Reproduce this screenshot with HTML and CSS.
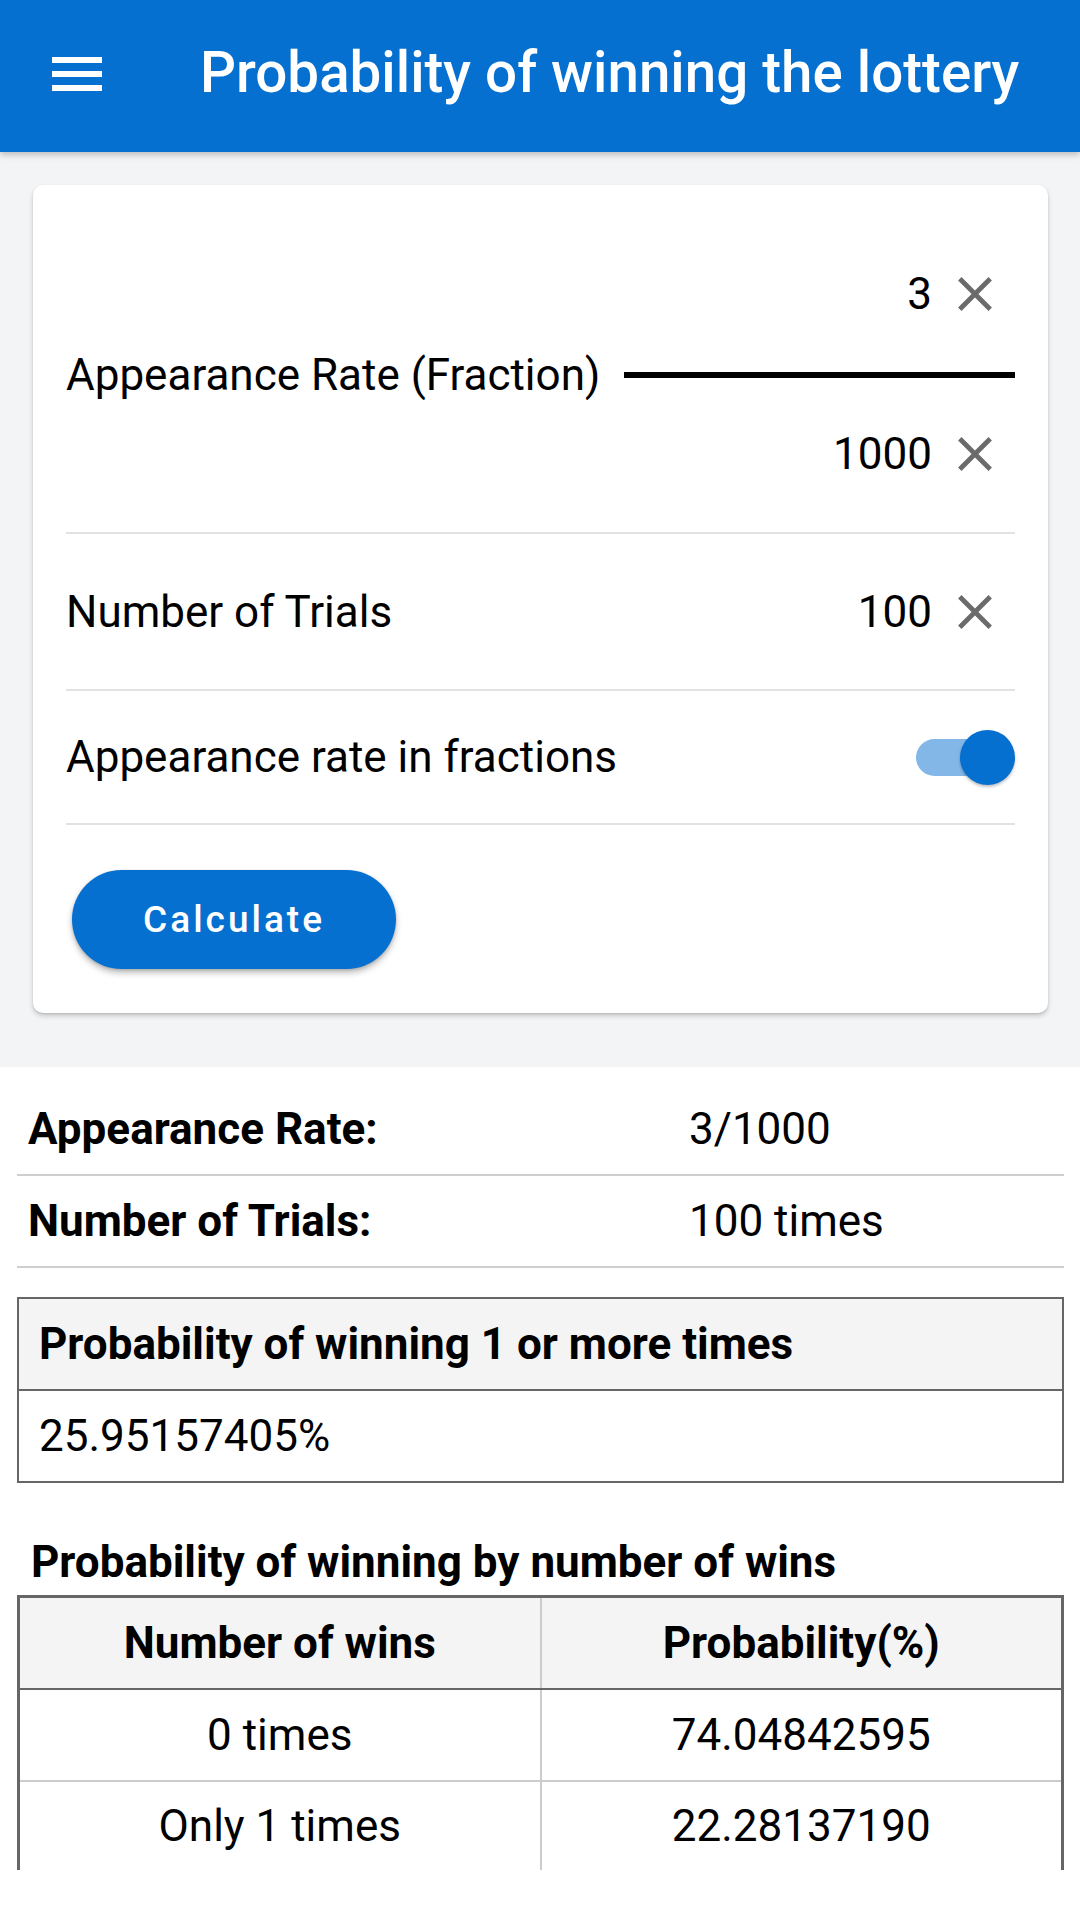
FILE: index.html
```html
<!DOCTYPE html>
<html>
<head>
<meta charset="utf-8">
<link rel="stylesheet" href="styles.css">
</head>
<body>
<header class="appbar">
  <svg class="menu" width="50" height="34" viewBox="0 0 50 34"><rect x="0" y="0" width="50" height="6" fill="#fff"/><rect x="0" y="14" width="50" height="6" fill="#fff"/><rect x="0" y="28" width="50" height="6" fill="#fff"/></svg>
  <div class="title">Probability of winning the lottery</div>
</header>
<main class="top">
  <section class="card">
    <div class="frac-row">
      <div class="frac-label">Appearance Rate (Fraction)</div>
      <div class="frac-col">
        <div class="field"><span class="val">3</span><svg class="clear" viewBox="0 0 24 24"><path d="M19 6.41L17.59 5 12 10.59 6.41 5 5 6.41 10.59 12 5 17.59 6.41 19 12 13.41 17.59 19 19 17.59 13.41 12z"/></svg></div>
        <div class="frac-line"></div>
        <div class="field"><span class="val">1000</span><svg class="clear" viewBox="0 0 24 24"><path d="M19 6.41L17.59 5 12 10.59 6.41 5 5 6.41 10.59 12 5 17.59 6.41 19 12 13.41 17.59 19 19 17.59 13.41 12z"/></svg></div>
      </div>
    </div>
    <div class="row trials">
      <div class="label">Number of Trials</div>
      <div class="field"><span class="val">100</span><svg class="clear" viewBox="0 0 24 24"><path d="M19 6.41L17.59 5 12 10.59 6.41 5 5 6.41 10.59 12 5 17.59 6.41 19 12 13.41 17.59 19 19 17.59 13.41 12z"/></svg></div>
    </div>
    <div class="row toggle-row">
      <div class="label">Appearance rate in fractions</div>
      <div class="switch"><div class="track"></div><div class="thumb"></div></div>
    </div>
    <div class="actions">
      <button class="btn">Calculate</button>
    </div>
  </section>
</main>
<section class="results">
  <div class="sum-row"><div class="sum-label">Appearance Rate:</div><div class="sum-val">3/1000</div></div>
  <div class="sum-row"><div class="sum-label">Number of Trials:</div><div class="sum-val">100 times</div></div>
  <table class="tbl one">
    <thead><tr><th>Probability of winning 1 or more times</th></tr></thead>
    <tbody><tr><td>25.95157405%</td></tr></tbody>
  </table>
  <h2 class="heading">Probability of winning by number of wins</h2>
  <table class="tbl two">
    <thead><tr><th>Number of wins</th><th>Probability(%)</th></tr></thead>
    <tbody>
      <tr><td>0 times</td><td>74.04842595</td></tr>
      <tr><td>Only 1 times</td><td>22.28137190</td></tr>
    </tbody>
  </table>
</section>
<div class="footer"></div>
</body>
</html>
```
FILE: styles.css
```css
* { box-sizing: border-box; }
html, body { margin: 0; padding: 0; }
body {
  width: 1080px;
  height: 1920px;
  overflow: hidden;
  background: #fff;
  font-family: Roboto, "Noto Sans", sans-serif;
  color: #000;
}
.appbar {
  height: 152px;
  background: #0670d1;
  display: flex;
  align-items: center;
  padding-left: 52px;
  position: relative;
  z-index: 2;
  box-shadow: 0 3px 6px rgba(0,0,0,0.22);
}
.menu { display: block; margin-top: -4px; }
.title {
  color: #fff;
  font-size: 56.5px;
  font-weight: 500;
  margin-left: 98px;
  margin-top: -6px;
  white-space: nowrap;
}
.top {
  background: #f3f4f6;
  padding: 33px 32px 54px 33px;
}
.card {
  background: #fff;
  border-radius: 10px;
  box-shadow: 0 3px 5px rgba(0,0,0,0.18), 0 1px 2px rgba(0,0,0,0.1);
  padding: 0 33px 44px 33px;
}
.frac-row {
  display: flex;
  align-items: center;
  padding: 54px 0 23px;
  border-bottom: 2px solid #e2e2e2;
}
.frac-label, .label {
  font-size: 44px;
  white-space: nowrap;
}
.frac-label { padding-top: 2px; }
.frac-col { flex: 1; margin-left: 24px; }
.field {
  display: flex;
  justify-content: flex-end;
  align-items: center;
  height: 110px;
  padding-right: 11px;
}
.val { font-size: 44px; }
.clear {
  width: 58px;
  height: 58px;
  fill: #6b6b6b;
  margin-left: 14px;
}
.frac-line {
  height: 6px;
  background: #000;
  margin: 23px 0 21px;
}
.row {
  display: flex;
  align-items: center;
  justify-content: space-between;
  border-bottom: 2px solid #e2e2e2;
}
.trials { height: 157px; }
.toggle-row { height: 134px; }
.switch {
  position: relative;
  width: 99px;
  height: 55px;
}
.track {
  position: absolute;
  left: 0;
  top: 9px;
  width: 92px;
  height: 37px;
  border-radius: 19px;
  background: #0670d1;
  opacity: 0.5;
}
.thumb {
  position: absolute;
  right: 0;
  top: 0;
  width: 55px;
  height: 55px;
  border-radius: 50%;
  background: #0670d1;
  box-shadow: 0 2px 3px rgba(0,0,0,0.25);
}
.actions { padding-top: 45px; padding-left: 6px; }
.btn {
  display: block;
  width: 324px;
  height: 99px;
  border: 0;
  border-radius: 50px;
  background: #0670d1;
  color: #fff;
  font-family: Roboto, sans-serif;
  font-size: 37px;
  font-weight: 500;
  letter-spacing: 3px;
  padding: 0;
  box-shadow: 0 4px 6px rgba(0,0,0,0.25), 0 1px 3px rgba(0,0,0,0.15);
}
.results {
  height: 803px;
  overflow: hidden;
  padding: 17px 16px 0 17px;
}
.sum-row {
  display: grid;
  grid-template-columns: 661px 1fr;
  height: 92px;
  align-items: center;
  border-bottom: 2px solid #cfcfcf;
  font-size: 44px;
}
.sum-label { font-weight: 700; padding-left: 11px; }
.sum-val { padding-left: 11px; }
.tbl {
  width: 100%;
  border-collapse: collapse;
  font-size: 44px;
}
.tbl th, .tbl td { height: 92px; padding: 0 20px; }
.tbl th { background: #f4f4f4; font-weight: 700; }
.one { margin-top: 29px; border: 2px solid #666; }
.one th { text-align: left; border-bottom: 2px solid #666; }
.one td { text-align: left; }
.heading {
  font-size: 44px;
  font-weight: 700;
  margin: 53px 0 7px 14px;
}
.two { border: 3px solid #666; }
.two th, .two td { text-align: center; width: 50%; border-left: 2px solid #ccc; }
.two th { border-bottom: 2px solid #666; }
.two td { border-bottom: 2px solid #ccc; }
.footer { height: 50px; background: #fff; }
```
